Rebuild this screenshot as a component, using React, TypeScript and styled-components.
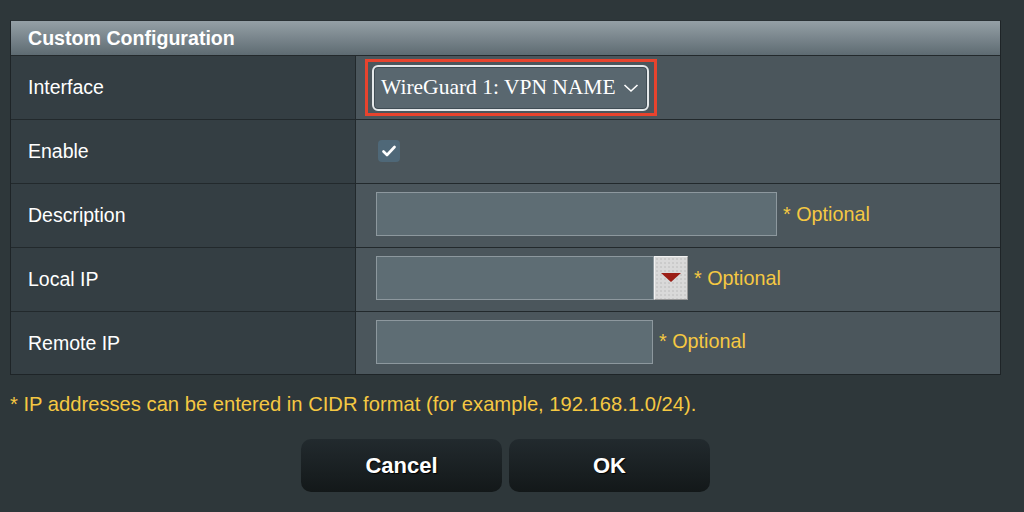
import React, { FC } from "react";
import styled, { createGlobalStyle } from "styled-components";

const GlobalStyle = createGlobalStyle`
  html, body {
    margin: 0;
    padding: 0;
    background: #2e373a;
    font-family: "Liberation Sans", Arial, sans-serif;
  }
`;

const Page = styled.div`
  width: 1024px;
  height: 512px;
  padding: 20px 0 0 10px;
  box-sizing: border-box;
  overflow: hidden;
`;

const Panel = styled.div`
  width: 991px;
`;

const Table = styled.div`
  border: 1px solid #1e2427;
  border-top-color: #2a3134;
`;

const Header = styled.div`
  height: 34px;
  display: flex;
  align-items: center;
  padding-left: 17px;
  background: linear-gradient(#95a0a6, #5e6b72);
  border-bottom: 1px solid #23292c;
  color: #fff;
  font-weight: bold;
  font-size: 19.6px;
`;

const Row = styled.div<{ $last?: boolean }>`
  display: grid;
  grid-template-columns: 345px 1fr;
  height: ${(p) => (p.$last ? 62 : 63)}px;
  border-bottom: ${(p) => (p.$last ? "none" : "1px solid #22292c")};
`;

const Label = styled.div`
  display: flex;
  align-items: center;
  padding-left: 17px;
  background: #343e43;
  border-right: 1px solid #22292c;
  color: #fff;
  font-size: 19.5px;
`;

const Value = styled.div<{ $pad?: number }>`
  display: flex;
  align-items: center;
  padding-left: ${(p) => p.$pad ?? 20}px;
  background: #4b565c;
`;

const Highlight = styled.div`
  border: 3px solid #e8432d;
  padding: 2px 5px 2px 4px;
  display: flex;
  align-items: center;
  height: 57px;
  box-sizing: border-box;
`;

const SelectBox = styled.div`
  display: flex;
  align-items: center;
  gap: 7px;
  height: 46px;
  box-sizing: border-box;
  padding: 0 8px 0 7px;
  border: 2px solid #e4e8ea;
  border-radius: 6px;
  background: #59676f;
  box-shadow: inset 0 0 0 1px #3f4c54;
  color: #fff;
  font-family: "Liberation Serif", "Times New Roman", serif;
  font-size: 21.5px;
`;

const Check = styled.div`
  width: 22px;
  height: 22px;
  margin-top: -2px;
  border-radius: 4px;
  background: #4f6878;
  display: flex;
  align-items: center;
  justify-content: center;
`;

const Field = styled.div`
  display: flex;
  align-items: center;
`;

const Input = styled.div<{ $w: number }>`
  width: ${(p) => p.$w}px;
  height: 44px;
  margin-top: -3px;
  box-sizing: border-box;
  border: 1px solid #8d989e;
  background: #5e6d74;
`;

const DropButton = styled.div`
  width: 34px;
  height: 44px;
  margin-top: -3px;
  box-sizing: border-box;
  border: 1px solid #f2f2f2;
  border-right-color: #9a9a9a;
  border-bottom-color: #9a9a9a;
  background-color: #d9d9d9;
  background-image: radial-gradient(#b9b9b9 0.6px, transparent 0.8px);
  background-size: 4px 4px;
  display: flex;
  align-items: center;
  justify-content: center;
`;

const Hint = styled.span<{ $gap: number }>`
  margin-left: ${(p) => p.$gap}px;
  margin-top: -3px;
  color: #f5c842;
  font-size: 19.8px;
`;

const Note = styled.div`
  margin-top: 18px;
  color: #f5c842;
  font-size: 20.2px;
`;

const Buttons = styled.div`
  display: flex;
  justify-content: center;
  gap: 7px;
  margin-top: 23px;
`;

const Button = styled.div`
  width: 201px;
  height: 53px;
  border-radius: 10px;
  background: linear-gradient(#222a2e, #131819);
  display: flex;
  align-items: center;
  justify-content: center;
  color: #fff;
  font-weight: bold;
  font-size: 22px;
  text-shadow: 1px 1px 1px #000;
`;

const Chevron: FC = () => (
  <svg width="16" height="10" viewBox="0 0 16 10">
    <path d="M1.5 2 L8 8 L14.5 2" fill="none" stroke="#fff" strokeWidth="1.6" />
  </svg>
);

const Tick: FC = () => (
  <svg width="14" height="12" viewBox="0 0 14 12">
    <path d="M1.5 6.5 L5 10 L12.5 2" fill="none" stroke="#fff" strokeWidth="2.6" strokeLinecap="round" strokeLinejoin="round" />
  </svg>
);

const Arrow: FC = () => (
  <svg width="20" height="10" viewBox="0 0 20 10">
    <path d="M0 0 H20 L10 9 Z" fill="#9b1e16" />
  </svg>
);

const App: FC = () => (
  <Page>
    <GlobalStyle />
    <Panel>
      <Table>
        <Header>Custom Configuration</Header>
        <Row>
          <Label>Interface</Label>
          <Value $pad={9}>
            <Highlight>
              <SelectBox>
                WireGuard 1: VPN NAME
                <Chevron />
              </SelectBox>
            </Highlight>
          </Value>
        </Row>
        <Row>
          <Label>Enable</Label>
          <Value $pad={22}>
            <Check>
              <Tick />
            </Check>
          </Value>
        </Row>
        <Row>
          <Label>Description</Label>
          <Value>
            <Field>
              <Input $w={401} />
              <Hint $gap={6}>* Optional</Hint>
            </Field>
          </Value>
        </Row>
        <Row>
          <Label>Local IP</Label>
          <Value>
            <Field>
              <Input $w={278} />
              <DropButton>
                <Arrow />
              </DropButton>
              <Hint $gap={6}>* Optional</Hint>
            </Field>
          </Value>
        </Row>
        <Row $last>
          <Label>Remote IP</Label>
          <Value>
            <Field>
              <Input $w={277} />
              <Hint $gap={6}>* Optional</Hint>
            </Field>
          </Value>
        </Row>
      </Table>
      <Note>* IP addresses can be entered in CIDR format (for example, 192.168.1.0/24).</Note>
      <Buttons>
        <Button>Cancel</Button>
        <Button>OK</Button>
      </Buttons>
    </Panel>
  </Page>
);

export default App;
